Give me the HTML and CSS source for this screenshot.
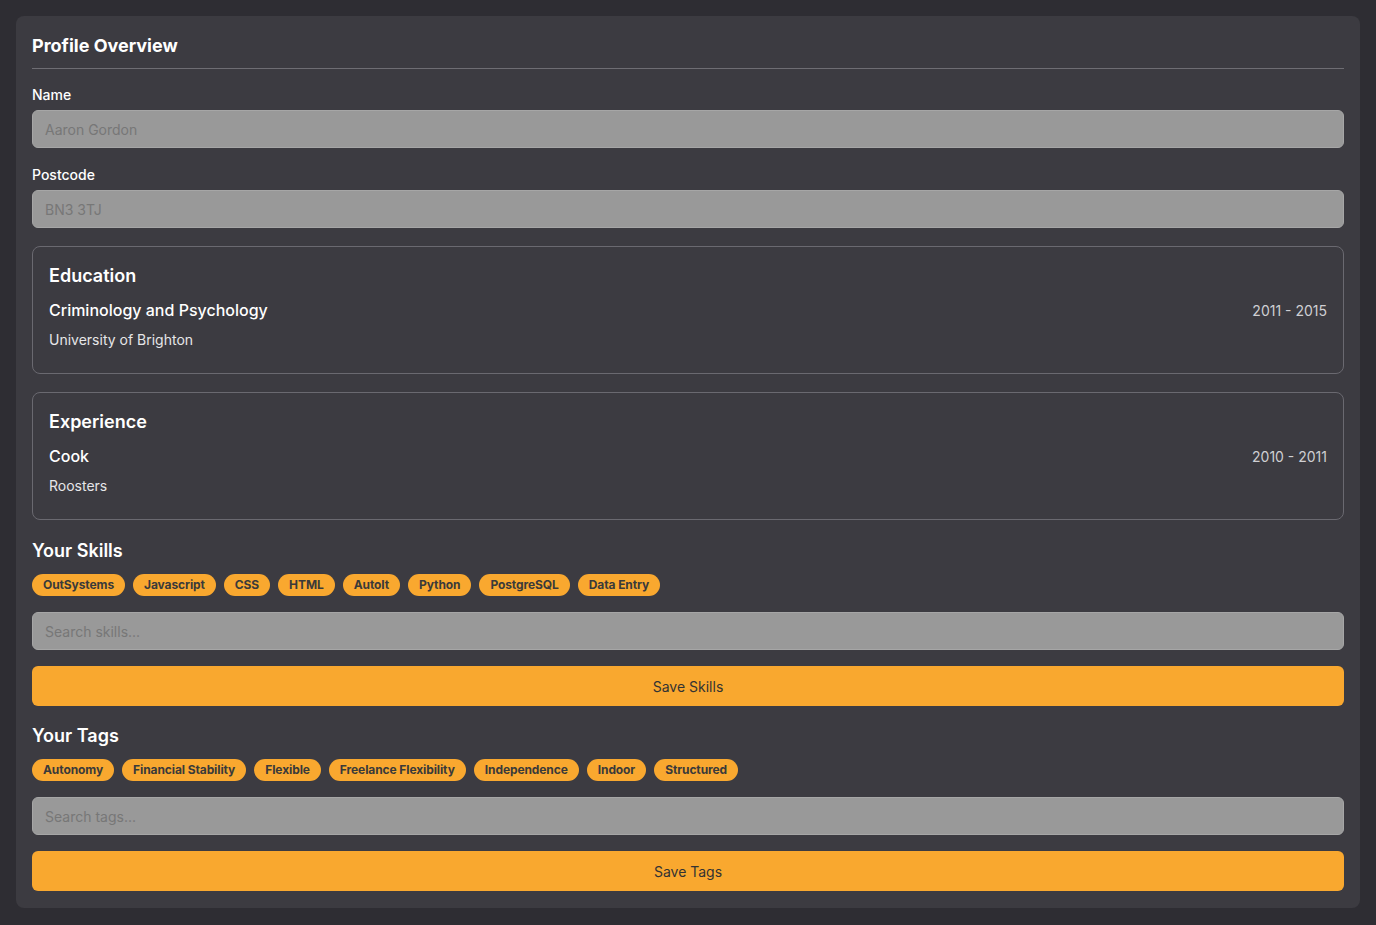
FILE: index.html
```html
<!DOCTYPE html>
<html lang="en">
<head>
<meta charset="utf-8">
<title>Profile Overview</title>
<link rel="stylesheet" href="styles.css">
</head>
<body>
<main class="card">
  <h1 class="title">Profile Overview</h1>

  <div class="field">
    <label class="label" for="name">Name</label>
    <input class="input" id="name" type="text" placeholder="Aaron Gordon" disabled>
  </div>

  <div class="field field-last">
    <label class="label" for="postcode">Postcode</label>
    <input class="input" id="postcode" type="text" placeholder="BN3 3TJ" disabled>
  </div>

  <section class="box">
    <h2 class="box-title">Education</h2>
    <div class="entry">
      <div class="entry-head">
        <span class="entry-name">Criminology and Psychology</span>
        <span class="entry-date">2011 - 2015</span>
      </div>
      <div class="entry-sub">University of Brighton</div>
    </div>
  </section>

  <section class="box box-last">
    <h2 class="box-title">Experience</h2>
    <div class="entry">
      <div class="entry-head">
        <span class="entry-name">Cook</span>
        <span class="entry-date">2010 - 2011</span>
      </div>
      <div class="entry-sub">Roosters</div>
    </div>
  </section>

  <section class="group">
    <h2 class="group-title">Your Skills</h2>
    <div class="pills">
      <span class="pill">OutSystems</span>
      <span class="pill">Javascript</span>
      <span class="pill">CSS</span>
      <span class="pill">HTML</span>
      <span class="pill">AutoIt</span>
      <span class="pill">Python</span>
      <span class="pill">PostgreSQL</span>
      <span class="pill">Data Entry</span>
    </div>
    <input class="input" type="text" placeholder="Search skills...">
    <button class="btn" type="button">Save Skills</button>
  </section>

  <section class="group group-next">
    <h2 class="group-title">Your Tags</h2>
    <div class="pills">
      <span class="pill">Autonomy</span>
      <span class="pill">Financial Stability</span>
      <span class="pill">Flexible</span>
      <span class="pill">Freelance Flexibility</span>
      <span class="pill">Independence</span>
      <span class="pill">Indoor</span>
      <span class="pill">Structured</span>
    </div>
    <input class="input" type="text" placeholder="Search tags...">
    <button class="btn" type="button">Save Tags</button>
  </section>
</main>
</body>
</html>
```

FILE: styles.css
```css
* { box-sizing: border-box; }

html, body {
  margin: 0;
  padding: 0;
  background: #2e2d33;
}

body {
  padding: 16px 16px;
  font-family: Inter, "Noto Sans", "Liberation Sans", sans-serif;
  color: #ffffff;
}

.card {
  background: #3c3b41;
  border-radius: 8px;
  padding: 16px 16px 17px;
  display: flex;
  flex-direction: column;
}

.title {
  margin: 0 0 16px;
  font-size: 18px;
  line-height: 28px;
  font-weight: 700;
  padding-bottom: 8px;
  border-bottom: 1px solid #6e6d73;
}

.field {
  display: flex;
  flex-direction: column;
  margin-bottom: 17px;
}

.field-last { margin-bottom: 18px; }

.label {
  font-size: 14px;
  line-height: 20px;
  font-weight: 500;
  margin-bottom: 5px;
}

.input {
  width: 100%;
  height: 38px;
  background: #999999;
  border: 1px solid #a6a6a6;
  border-radius: 6px;
  padding: 0 12px;
  font-family: inherit;
  font-size: 14px;
  color: #333;
  outline: none;
}

.input::placeholder {
  color: #777777;
}

.box {
  border: 1px solid #6a6970;
  border-radius: 8px;
  padding: 15px 16px 23px;
  margin-bottom: 18px;
}

.box-last { margin-bottom: 17px; }

.box-title {
  margin: 0 0 8px;
  font-size: 18px;
  line-height: 28px;
  font-weight: 600;
}

.entry-head {
  display: flex;
  justify-content: space-between;
  align-items: center;
  margin-bottom: 8px;
}

.entry-name {
  font-size: 16px;
  line-height: 24px;
  font-weight: 500;
}

.entry-date {
  font-size: 14px;
  color: #cfcfd3;
}

.entry-sub {
  font-size: 14px;
  line-height: 20px;
  color: #e6e6e8;
}

.group {
  display: flex;
  flex-direction: column;
}

.group-next { margin-top: 16px; }

.group-title {
  margin: 0 0 9px;
  font-size: 18px;
  line-height: 28px;
  font-weight: 600;
}

.pills {
  display: flex;
  flex-wrap: wrap;
  gap: 8px;
  margin-bottom: 16px;
}

.pill {
  background: #f9a82f;
  color: #3a3a3a;
  font-size: 12px;
  line-height: 16px;
  font-weight: 700;
  padding: 3px 11px;
  border-radius: 999px;
  letter-spacing: -0.1px;
}

.btn {
  margin-top: 16px;
  width: 100%;
  height: 40px;
  background: #f9a82f;
  border: none;
  border-radius: 6px;
  font-family: inherit;
  font-size: 14px;
  color: #333333;
  cursor: pointer;
}
```
